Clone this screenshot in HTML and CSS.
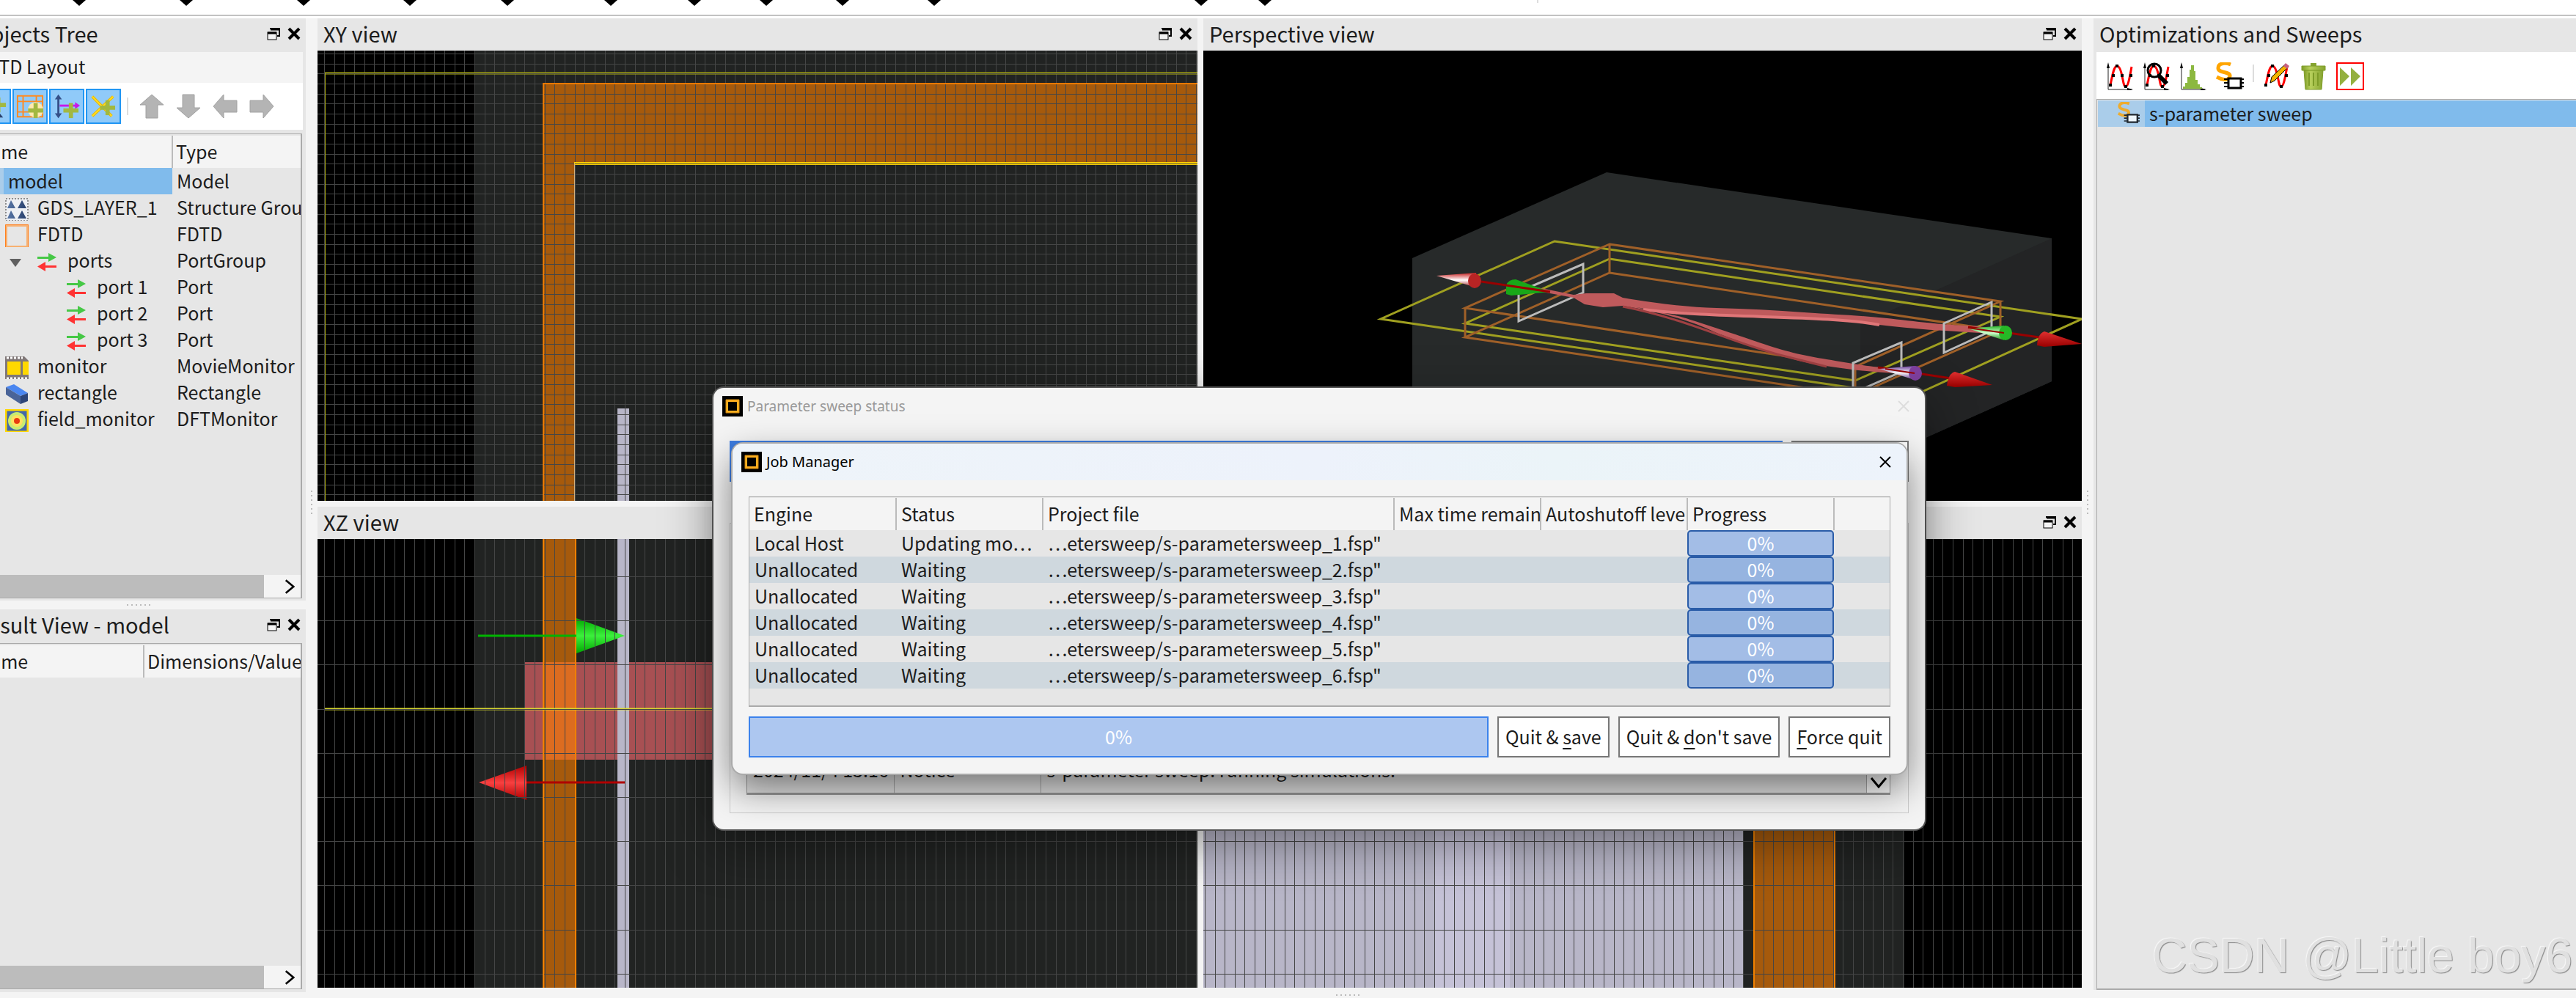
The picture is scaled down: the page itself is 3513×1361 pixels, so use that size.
FILE: index.html
```html
<!DOCTYPE html>
<html lang="en">
<head>
<meta charset="utf-8">
<title>FDTD Layout</title>
<link rel="stylesheet" href="styles.css">
</head>
<body>
<svg class="defs" aria-hidden="true">
  <defs>
    <symbol id="float" viewBox="0 0 18 18"><path d="M5 3V2h12v10h-3" fill="none" stroke="#000" stroke-width="2"/><path d="M5 3h12" stroke="#000" stroke-width="3"/><rect x="1" y="7" width="12" height="10" fill="#f4f4f4" stroke="#000" stroke-width="1"/><path d="M1 8h12" stroke="#000" stroke-width="3"/></symbol>
    <symbol id="cross" viewBox="0 0 18 18"><path d="M2 2l14 14M16 2L2 16" stroke="#000" stroke-width="4"/></symbol>
    <symbol id="thin-cross" viewBox="0 0 16 16"><path d="M1 1l14 14M15 1L1 15" stroke="currentColor" stroke-width="2"/></symbol>
    <symbol id="app" viewBox="0 0 28 28"><path d="M0 0h28v28H0z"/><path d="M6.500 6.500h15v15h-15z" fill="none" stroke="#ffb020" stroke-width="3"/><path d="M5 5h18v18H5z" fill="none" stroke="#c98610" stroke-width="1"/></symbol>
    <symbol id="port" viewBox="0 0 28 28"><path d="M1 6h15V1l11 6-11 6V9H1z" fill="#46c846"/><path d="M27 18H12v-5L1 19.500 12 26v-5h15z" fill="#f33"/></symbol>
    <symbol id="arrow" viewBox="0 0 34 36"><path d="M17 2L33 16H25V34H9V16H1z" fill="#b4b4b4" stroke="#a2a2a2"/></symbol>
    <symbol id="plus" viewBox="0 0 22 22"><path d="M8 0h6v8h8v6h-8v8H8v-8H0V8h8z" fill="#a2b840"/></symbol>
    <symbol id="curve" viewBox="0 0 36 38"><path d="M2 37V4M2 37H34" fill="none" stroke="#222" stroke-width="1"/><path d="M2 0l2 8H0zM36 37l-8 2v-4z"/><path d="M5 31C8 16 10 5 14 5S20 14 21 19C23 27 23 33 26 33S31 23 34 6" fill="none" stroke="#f00" stroke-width="3"/><path d="M3 29h4v4H3zM12 3h4v4h-4zM7 16h4v4H7zM19 16h4v4h-4zM24 31h4v4h-4zM31 16h4v4h-4z"/></symbol>
    <symbol id="sparam" viewBox="0 0 38 38"><path d="M20 3C12 0 3 1 3 8S20 12 19 19 8 24 1 20" fill="none" stroke="#ffa500" stroke-width="5"/><path d="M11 23h5M11 28h5M11 33h5M34 23h4M34 28h4M34 33h4" stroke="#000" stroke-width="2"/><path d="M17 22h17v13H17z" fill="#fff" stroke="#000" stroke-width="3"/></symbol>
    <pattern id="grid-xy" width="41" height="41" patternUnits="userSpaceOnUse" x="9" y="4"><path d="M0 .5h41M0 14.500h41M0 27.500h41M.5 0v41M14.500 0v41M27.500 0v41" stroke="#454646"/></pattern>
    <pattern id="grid-xz" width="41" height="301" patternUnits="userSpaceOnUse" x="9" y="51"><path d="M0 .5h41M0 60.500h41M0 120.500h41M0 181.500h41M0 241.500h41M.5 0v301M14.500 0v301M27.500 0v301" stroke="#454646"/></pattern>
    <pattern id="grid-yz" width="68" height="301" patternUnits="userSpaceOnUse" x="2" y="51"><path d="M0 .5h68M0 60.500h68M0 120.500h68M0 181.500h68M0 241.500h68M.5 0v301M14.500 0v301M27.500 0v301M41.500 0v301M54.500 0v301" stroke="#454646"/></pattern>
    <linearGradient id="g-green" x2="0" y2="1"><stop offset="0" stop-color="#00a800"/><stop offset=".5" stop-color="#3cf03c"/><stop offset="1" stop-color="#00a800"/></linearGradient>
    <linearGradient id="g-red" x2="0" y2="1"><stop offset="0" stop-color="#b00000"/><stop offset=".5" stop-color="#f84040"/><stop offset="1" stop-color="#b00000"/></linearGradient>
    <linearGradient id="g-cone" x2="0" y2="1"><stop offset="0" stop-color="#c82020"/><stop offset=".5" stop-color="#fff"/><stop offset="1" stop-color="#a01010"/></linearGradient>
    <linearGradient id="g-gcone" x2="0" y2="1"><stop offset="0" stop-color="#20b020"/><stop offset=".5" stop-color="#d0ffd0"/><stop offset="1" stop-color="#109010"/></linearGradient>
    <linearGradient id="g-pcone" x2="0" y2="1"><stop offset="0" stop-color="#7040a0"/><stop offset=".5" stop-color="#fff"/><stop offset="1" stop-color="#603090"/></linearGradient>
    <linearGradient id="g-dark" x2="0" y2="1"><stop offset="0" stop-color="#e03030"/><stop offset="1" stop-color="#900"/></linearGradient>
    <linearGradient id="g-bin" x2="1" y2="0"><stop offset="0" stop-color="#7e9c28"/><stop offset=".35" stop-color="#b8d05c"/><stop offset="1" stop-color="#86a430"/></linearGradient>
    <linearGradient id="g-pyr" x2="1" y2="0"><stop offset="0" stop-color="#5a78a8"/><stop offset="1" stop-color="#28406c"/></linearGradient>
  </defs>
</svg>

<header class="toolstrip">
  <svg class="fill"><path d="M99 0h18l-9 8zM245 0h18l-9 8zM405 0h18l-9 8zM550 0h18l-9 8zM683 0h18l-9 8zM824 0h18l-9 8zM938 0h18l-9 8zM1036 0h18l-9 8zM1140 0h18l-9 8zM1265 0h18l-9 8zM1629 0h18l-9 8zM1716 0h18l-9 8z"/><path d="M2097 0v4" stroke="#ddd" stroke-width="2"/></svg>
</header>

<main class="workspace">
  <div class="left">
    <section class="dock">
      <div class="dock-title"><h2>Objects Tree</h2><button aria-label="Float"><svg><use href="#float"/></svg></button><button aria-label="Close"><svg><use href="#cross"/></svg></button></div>
      <div class="layout-name">FDTD Layout</div>
      <div class="tree-tools">
        <button class="tool on" aria-label="Add structure"><svg viewBox="0 0 40 32"><path d="M24 20l10 12H14z" fill="#28406c"/><use href="#plus" x="16" y="3" width="22" height="22"/></svg></button>
        <button class="tool on" aria-label="Add simulation"><svg viewBox="0 0 40 34"><path d="M2 2h36v30H2zM10 2v30M29 2v30M2 10h36M2 25h36" fill="none" stroke="#ff8a20" stroke-width="2"/><circle cx="28" cy="22" r="11" fill="#ffe9b0"/><use href="#plus" x="17" y="12" width="22" height="22"/></svg></button>
        <button class="tool on" aria-label="Add source"><svg viewBox="0 0 40 34"><path d="M8 3v28" stroke="#345088" stroke-width="3"/><path d="M8 0l5 7H3zM8 34l5-7H3z" fill="#345088"/><path d="M10 16h24" stroke="#c818e8" stroke-width="3"/><path d="M32 11l7 5-7 5z" fill="#c818e8"/><use href="#plus" x="15" y="12" width="22" height="22"/></svg></button>
        <button class="tool on" aria-label="Add monitor"><svg viewBox="0 0 40 34"><path d="M4 3l28 28M34 3L4 31" stroke="#e8b800" stroke-width="4"/><path d="M4 3l28 28M34 3L4 31" stroke="#ffdc20" stroke-width="2"/><use href="#plus" x="15" y="8" width="22" height="22"/></svg></button>
        <span class="sep"></span>
        <button class="tool" aria-label="Move up"><svg viewBox="0 0 34 36"><use href="#arrow"/></svg></button>
        <button class="tool" aria-label="Move down"><svg viewBox="0 0 34 36"><use href="#arrow" transform="rotate(180 17 18)"/></svg></button>
        <button class="tool" aria-label="Move left"><svg viewBox="0 0 34 36"><use href="#arrow" transform="rotate(-90 17 18)"/></svg></button>
        <button class="tool" aria-label="Move right"><svg viewBox="0 0 34 36"><use href="#arrow" transform="rotate(90 17 18)"/></svg></button>
      </div>
      <div class="frame tree-frame">
        <table class="tree">
          <colgroup><col class="c-name"><col></colgroup>
          <thead><tr><th>Name</th><th>Type</th></tr></thead>
          <tbody>
            <tr class="selected"><td class="l0">model</td><td>Model</td></tr>
            <tr><td class="l1"><svg viewBox="0 0 32 32"><path d="M1 1h30v30H1z" fill="#eef0f4" stroke="#333" stroke-dasharray="2 2"/><path d="M8 3l6 11H3zM23 3l6 11H17zM8 17l6 11H3zM23 17l6 11H17z" fill="url(#g-pyr)"/></svg>GDS_LAYER_1</td><td>Structure Group</td></tr>
            <tr><td class="l1"><svg viewBox="0 0 32 32"><path d="M1.500 1.500h29v29h-29z" fill="#e6e6e6" stroke="#f7b070" stroke-width="3"/><path d="M.5.5h31v31H.5z" fill="none" stroke="#ff8020"/></svg>FDTD</td><td>FDTD</td></tr>
            <tr><td class="l1"><svg viewBox="0 0 32 32"><path d="M6 11h16l-8 11z" fill="#606060"/></svg><svg viewBox="0 0 28 28"><use href="#port"/></svg>ports</td><td>PortGroup</td></tr>
            <tr><td class="l3"><svg viewBox="0 0 28 28"><use href="#port"/></svg>port 1</td><td>Port</td></tr>
            <tr><td class="l3"><svg viewBox="0 0 28 28"><use href="#port"/></svg>port 2</td><td>Port</td></tr>
            <tr><td class="l3"><svg viewBox="0 0 28 28"><use href="#port"/></svg>port 3</td><td>Port</td></tr>
            <tr><td class="l1"><svg viewBox="0 0 32 32"><path d="M0 0h26l6 6v26H0z" fill="#807878"/><path d="M2 2h22M2 30h29" stroke="#fff" stroke-width="3" stroke-dasharray="3 2"/><path d="M3 7h18v18H3zM24 7h8v18h-8z" fill="#ffd800"/></svg>monitor</td><td>MovieMonitor</td></tr>
            <tr><td class="l1"><svg viewBox="0 0 32 32"><path d="M1 6L12 2 31 14 21 18z" fill="#4a86f0"/><path d="M1 6l20 12v11L1 16z" fill="#4a6498"/><path d="M21 18l10-4v11l-10 4z" fill="#2c4478"/></svg>rectangle</td><td>Rectangle</td></tr>
            <tr><td class="l1"><svg viewBox="0 0 32 32"><path d="M1 1h30v30H1z" fill="#4468a8" stroke="#ffd800" stroke-width="3"/><circle cx="16" cy="16" r="12" fill="#c8ec70"/><circle cx="16" cy="16" r="8" fill="#ffe060"/><circle cx="16" cy="16" r="4" fill="#e83c10"/></svg>field_monitor</td><td>DFTMonitor</td></tr>
          </tbody>
        </table>
        <div class="hscroll"><span class="thumb"></span><svg viewBox="0 0 16 24"><path d="M2 2l12 10L2 22" fill="none" stroke="#000" stroke-width="3"/></svg></div>
      </div>
    </section>
    <div class="hsplit"></div>
    <section class="dock result">
      <div class="dock-title"><h2>Result View - model</h2><button aria-label="Float"><svg><use href="#float"/></svg></button><button aria-label="Close"><svg><use href="#cross"/></svg></button></div>
      <div class="frame result-frame">
        <table class="tree">
          <colgroup><col class="c-result"><col></colgroup>
          <thead><tr><th>Name</th><th>Dimensions/Value</th></tr></thead>
        </table>
        <div class="hscroll"><span class="thumb"></span><svg viewBox="0 0 16 24"><path d="M2 2l12 10L2 22" fill="none" stroke="#000" stroke-width="3"/></svg></div>
      </div>
    </section>
  </div>
  <div class="vsplit"><i></i></div>

  <div class="views">
    <section class="dock">
      <div class="dock-title"><h2>XY view</h2><button aria-label="Float"><svg><use href="#float"/></svg></button><button aria-label="Close"><svg><use href="#cross"/></svg></button></div>
      <svg class="canvas">
        <rect x="214" width="100%" height="100%" fill="#212322"/>
        <path d="M307 44H2400V154H350V900H307z" fill="#a65a0c"/>
        <rect width="100%" height="100%" fill="url(#grid-xy)"/>
        <path d="M308 900V45H2400" fill="none" stroke="#e87800" stroke-width="2"/>
        <path d="M350 154H2400" stroke="#ffd000" stroke-width="4"/><path d="M350 154.500H2400" stroke="#454646"/>
        <path d="M350.500 154V900" stroke="#d0b080"/>
        <path d="M10 31H2400" stroke="#a8a810" stroke-width="3"/><path d="M10 31.500H2400" stroke="#454646"/>
        <path d="M10.500 31V900" stroke="#a8a810"/>
        <path d="M409 488h16v400h-16z" fill="#b8b6c8"/><path d="M419.500 488V900M409 496.500h16M409 510.500h16M409 523.500h16M409 537.500h16M409 551.500h16M409 564.500h16M409 578.500h16M409 592.500h16M409 605.500h16" stroke="#454646"/>
      </svg>
    </section>
    <section class="dock">
      <div class="dock-title"><h2>Perspective view</h2><button aria-label="Float"><svg><use href="#float"/></svg></button><button aria-label="Close"><svg><use href="#cross"/></svg></button></div>
      <svg class="canvas">
        <path d="M285 283L550 166 1157 256V451L985 528 700 656H285z" fill="#272a2a"/>
        <path d="M896 373L1157 256V451L985 528 896 570z" fill="#232425"/>
        <g fill="none" stroke-width="3">
          <path d="M887 460L242 366 479 260 1198 366 950 479" stroke="#a0a020"/>
          <path d="M554 284L1087 363 889 450 357 372z" stroke="#a0a020"/>
          <path d="M554 264L1087 342 889 431 357 351zM554 303L1087 382 889 470 357 391zM554 264v39M1087 342v40M357 351v40M889 431v39" stroke="#a06028"/>
          <path d="M430 329L518 291V330L430 369z" stroke="#bbb"/>
        </g>
        <path d="M446 321L505 333 522 331 560 331 572 337C620 345 660 350 700 351S780 354 819 357 880 360 922 364 1000 374 1060 376V385C1010 382 970 380 922 374 860 366 850 366 819 366S740 362 700 361 630 357 590 350C630 358 650 362 664 367 700 378 740 392 764 400 800 412 820 416 850 421S900 430 944 434V440C900 438 860 432 830 427 780 416 740 400 700 385 660 366 620 356 572 348L545 350 520 346 505 337 446 326z" fill="#bf5a5c"/>
        <path d="M600 353C700 366 850 360 922 374" fill="none" stroke="#e07678" stroke-width="4"/>
        <path d="M572 349C660 366 720 398 790 416L850 431" fill="none" stroke="#a04042" stroke-width="3"/>
        <g fill="none" stroke="#bbb" stroke-width="3"><path d="M1010 372L1075 343V382L1010 412z"/><path d="M886 470V426L952 398V438L886 467"/></g>
        <path d="M318 307L372 303V323z" fill="url(#g-cone)"/><ellipse cx="370" cy="314" rx="9" ry="10" fill="#b82424"/>
        <path d="M413 332V320Q416 312 426 312L473 329 420 334z" fill="#18a818"/>
        <path d="M379 315L473 329M1043 377L1140 391M920 432L1020 447" stroke="#900" stroke-width="3"/>
        <path d="M1043 379L1092 375V395z" fill="url(#g-gcone)"/><ellipse cx="1094" cy="385" rx="9" ry="10" fill="#26b826"/>
        <path d="M922 434L970 430V449z" fill="url(#g-pcone)"/><ellipse cx="971" cy="440" rx="9" ry="10" fill="#8040a0"/>
        <path d="M1043 378L1092 385M930 434L970 440" stroke="#900" stroke-width="2"/>
        <path d="M1137 402Q1138 386 1147 383L1198 400 1147 404z" fill="url(#g-dark)"/>
        <path d="M1014 457Q1016 440 1025 438L1076 456 1025 459z" fill="url(#g-dark)"/>
      </svg>
    </section>
    <section class="dock">
      <div class="dock-title"><h2>XZ view</h2><button aria-label="Float"><svg><use href="#float"/></svg></button><button aria-label="Close"><svg><use href="#cross"/></svg></button></div>
      <svg class="canvas">
        <rect x="214" width="100%" height="100%" fill="#212322"/>
        <rect x="283" y="168" width="100%" height="133" fill="#a85053"/>
        <rect x="307" width="46" height="100%" fill="#a65a0c"/>
        <rect x="311" y="168" width="42" height="133" fill="#dc6c20"/>
        <rect x="409" width="16" height="100%" fill="#b8b6c8"/>
        <path d="M353 108L419 132 353 156z" fill="url(#g-green)"/>
        <path d="M220 332L285 309V356z" fill="url(#g-red)"/>
        <rect width="100%" height="100%" fill="url(#grid-xz)"/>
        <path d="M308 0V900M352 0V900" stroke="#f08000" stroke-width="2"/>
        <path d="M10 232H2400" stroke="#d8d830" stroke-width="3"/><path d="M10 232.500H2400" stroke="#454646"/>
        <path d="M219 132H353" stroke="#00b400" stroke-width="3"/><path d="M285 332H419" stroke="#b00000" stroke-width="3"/>
      </svg>
    </section>
    <section class="dock">
      <div class="dock-title"><h2>YZ view</h2><button aria-label="Float"><svg><use href="#float"/></svg></button><button aria-label="Close"><svg><use href="#cross"/></svg></button></div>
      <svg class="canvas">
        <rect width="956" height="100%" fill="#212322"/>
        <rect width="737" height="100%" fill="#b8b6c8"/>
        <rect x="316" width="102" height="100%" fill="#c5c2d7"/>
        <rect x="750" width="112" height="100%" fill="#a65a0c"/>
        <rect width="100%" height="100%" fill="url(#grid-yz)"/>
        <path d="M751 0V900M861 0V900" stroke="#f08000" stroke-width="2"/>
      </svg>
    </section>
  </div>
  <div class="vsplit"><i></i></div>

  <section class="dock right">
    <div class="dock-title"><h2>Optimizations and Sweeps</h2></div>
    <div class="sweep-tools">
      <button class="tool" aria-label="Sweep"><svg viewBox="0 0 36 38"><use href="#curve"/></svg></button>
      <button class="tool" aria-label="Optimization"><svg viewBox="0 0 36 38"><use href="#curve"/><circle cx="15" cy="11" r="9" fill="none" stroke="#000" stroke-width="3"/><path d="M20 17l12 12" stroke="#000" stroke-width="6"/></svg></button>
      <button class="tool" aria-label="Yield"><svg viewBox="0 0 36 38"><path d="M2 37V4M2 37H34" stroke="#222"/><path d="M2 0l2 8H0zM36 37l-8 2v-4z"/><path d="M4 36v-3h3v-5h3v-8h3V10h2V4h4v8h2v12h3v6h3v4h3v2z" fill="#8cb840"/></svg></button>
      <button class="tool" aria-label="S-parameter sweep"><svg viewBox="0 0 38 38"><use href="#sparam"/></svg></button>
      <span class="sep"></span>
      <button class="tool" aria-label="Edit"><svg viewBox="0 0 36 38"><path d="M3 31C6 16 8 5 12 5S18 14 19 19C21 27 21 33 24 33S29 23 32 6" fill="none" stroke="#f00" stroke-width="3"/><path d="M1 29h4v4H1zM10 3h4v4h-4zM5 16h4v4H5zM22 31h4v4h-4zM29 16h4v4h-4z"/><path d="M9 28l2-8L30 2l4 4-19 19z" fill="#f5b400" stroke="#000"/><path d="M27 5l3-4 5 4-3 4z" fill="#c86080"/></svg></button>
      <button class="tool" aria-label="Delete"><svg viewBox="0 0 34 38"><path d="M13 1h8v4h-8z" fill="#86a430"/><path d="M1 5h32v6H1z" fill="url(#g-bin)" stroke="#7e9c28"/><path d="M4 11h26l-2 26H6z" fill="url(#g-bin)" stroke="#7e9c28"/><path d="M11 14v18M17 14v18M23 14v18" stroke="#7e9c28" stroke-width="2"/></svg></button>
      <button class="tool" aria-label="Run"><svg viewBox="0 0 38 38"><path d="M1 1h36v36H1z" fill="#fff" stroke="#f00" stroke-width="2"/><path d="M5 7l13 12L5 32zM20 7l13 12-13 13z" fill="#94b040"/></svg></button>
    </div>
    <div class="frame sweep-frame">
      <div class="sweep-row"><span class="sweep-icon"><svg viewBox="0 0 38 38"><use href="#sparam"/></svg></span><span>s-parameter sweep</span></div>
      <div class="watermark">CSDN @Little boy6</div>
    </div>
  </section>
</main>
<footer class="bottom"><i></i></footer>

<section class="window status-window" aria-label="Parameter sweep status">
  <div class="window-title"><svg><use href="#app"/></svg><h3>Parameter sweep status</h3><button aria-label="Close"><svg><use href="#thin-cross"/></svg></button></div>
  <div class="status-actions"><div class="bar solid"></div><button class="push" aria-label="Abort"></button></div>
  <div class="group">
    <div class="log">
      <table><colgroup><col class="w1"><col class="w1"><col></colgroup><tbody><tr><td>2024/11/4 15:16</td><td>Notice</td><td>s-parameter sweep: running simulations.</td></tr></tbody></table>
      <div class="log-scroll"><svg viewBox="0 0 24 16"><path d="M2 2l10 12L22 2" fill="none" stroke="#000" stroke-width="3"/></svg></div>
    </div>
  </div>
</section>

<section class="window job-window" aria-label="Job Manager">
  <div class="window-title"><svg><use href="#app"/></svg><h3>Job Manager</h3><button aria-label="Close"><svg><use href="#thin-cross"/></svg></button></div>
  <div class="jobs-body">
    <div class="jobs-frame">
      <table class="jobs">
        <colgroup><col class="w1"><col class="w1"><col class="w-file"><col class="w1"><col class="w1"><col class="w1"><col></colgroup>
        <thead><tr><th>Engine</th><th>Status</th><th>Project file</th><th>Max time remaining</th><th>Autoshutoff level</th><th>Progress</th><th></th></tr></thead>
        <tbody>
          <tr><td>Local Host</td><td>Updating mo…</td><td>…etersweep/s-parametersweep_1.fsp"</td><td></td><td></td><td class="prog"><div>0%</div></td><td></td></tr>
          <tr><td>Unallocated</td><td>Waiting</td><td>…etersweep/s-parametersweep_2.fsp"</td><td></td><td></td><td class="prog"><div>0%</div></td><td></td></tr>
          <tr><td>Unallocated</td><td>Waiting</td><td>…etersweep/s-parametersweep_3.fsp"</td><td></td><td></td><td class="prog"><div>0%</div></td><td></td></tr>
          <tr><td>Unallocated</td><td>Waiting</td><td>…etersweep/s-parametersweep_4.fsp"</td><td></td><td></td><td class="prog"><div>0%</div></td><td></td></tr>
          <tr><td>Unallocated</td><td>Waiting</td><td>…etersweep/s-parametersweep_5.fsp"</td><td></td><td></td><td class="prog"><div>0%</div></td><td></td></tr>
          <tr><td>Unallocated</td><td>Waiting</td><td>…etersweep/s-parametersweep_6.fsp"</td><td></td><td></td><td class="prog"><div>0%</div></td><td></td></tr>
        </tbody>
      </table>
    </div>
    <div class="jobs-actions">
      <div class="bar">0%</div>
      <button class="push">Quit &amp; <u>s</u>ave</button>
      <button class="push">Quit &amp; <u>d</u>on't save</button>
      <button class="push"><u>F</u>orce quit</button>
    </div>
  </div>
</section>
</body>
</html>
```
FILE: styles.css
```css
* { box-sizing: border-box; }
body {
  margin: 0;
  height: 100vh;
  overflow: hidden;
  display: flex;
  flex-direction: column;
  background: #f4f4f4;
  color: #1c1c1c;
  font: 25px/34px "Noto Sans CJK SC", sans-serif;
}
h2, h3 { margin: 0; font-weight: 400; }
button { font: inherit; color: inherit; background: none; border: 0; padding: 0; }
svg { display: block; flex: none; }
table { border-collapse: collapse; table-layout: fixed; width: 100%; }
th, td { padding: 0 0 2px; text-align: left; font-weight: 400; white-space: nowrap; overflow: hidden; }
.defs { position: absolute; width: 0; height: 0; }

.toolstrip { height: 25px; background: linear-gradient(#fff 20px, #c2c2c2 20px, #c2c2c2 22px, #fff 22px); }
.fill { width: 100%; height: 20px; }
.workspace { flex: 1; min-height: 0; display: grid; grid-template-columns: 417px 16px minmax(0, 1fr) 16px 658px; }
.bottom { height: 8px; display: flex; justify-content: center; padding: 3px 0 0 164px; }
.bottom i { width: 34px; height: 2px; background: repeating-linear-gradient(90deg, #bbb 0 2px, transparent 2px 6px); }

.dock { background: #e6e6e6; display: flex; flex-direction: column; min-width: 0; min-height: 0; }
.dock-title { height: 44px; flex: none; display: flex; align-items: center; gap: 10px; padding: 0 7px 2px 8px; }
.dock-title h2 { flex: 1; font-size: 29px; line-height: 38px; padding-bottom: 3px; white-space: nowrap; }
.dock-title svg { width: 18px; height: 18px; }

.left { display: flex; flex-direction: column; margin-left: -40px; }
.left .dock { flex: 794; }
.left .result { flex: 522; }
.left .dock-title { height: 46px; padding: 0 7px 4px 6px; }
.hsplit { height: 12px; margin-left: 213px; width: 33px; background: repeating-linear-gradient(90deg, #bbb 0 2px, transparent 2px 6px) 0 5px / 33px 2px no-repeat; }
.layout-name { background: #f4f4f4; height: 42px; padding: 2px 8px; margin-right: 4px; }
.tree-tools { display: flex; align-items: center; gap: 2px; height: 64px; background: #fff; margin-right: 4px; padding-left: 7px; }
.tool { width: 48px; height: 48px; display: grid; place-items: center; }
.tool svg { width: 38px; height: 36px; }
.tool.on { background: #90caf9; border: 2px solid #2196f3; }
.sep { width: 2px; height: 24px; background: #ddd; margin: 0 6px; }
.tree-frame, .result-frame { flex: 1; margin: 0 5px 3px 0; padding-top: 2px; border: 1px solid #aaa; border-right-width: 2px; display: flex; flex-direction: column; min-height: 0; }
.tree-frame { margin-top: 5px; }
.tree th { background: #f4f4f4; height: 44px; padding-left: 8px; }
.tree th + th { border-left: 2px solid #bbb; padding-left: 4px; }
.tree td { height: 36px; padding-left: 6px; }
.tree td svg { display: inline-block; width: 32px; height: 32px; margin: 0 12px 0 -4px; vertical-align: middle; margin-top: -4px; margin-bottom: -4px; }
.tree td svg + svg { margin-left: -1px; margin-right: 14px; width: 28px; }
.tree .l0 { padding-left: 50px; background: linear-gradient(90deg, #aacdea 44px, #80bbec 44px); }
.tree .l1 { padding-left: 50px; }
.tree .l3 { padding-left: 133px; }
.tree .l3 svg { width: 28px; margin-right: 14px; }
.c-name { width: 274px; }
.c-result { width: 235px; }
.hscroll { margin-top: auto; height: 31px; display: flex; justify-content: space-between; align-items: center; background: #f4f4f4; padding-right: 8px; }
.hscroll .thumb { width: 399px; height: 100%; background: #bcbcbc; }
.hscroll svg { width: 14px; height: 22px; }
.result-frame { margin-bottom: 4px; }

.vsplit { display: grid; place-items: center; }
.vsplit i { width: 2px; height: 34px; margin-bottom: 6px; background: repeating-linear-gradient(#bbb 0 2px, transparent 2px 6px); }
.views { display: grid; grid-template-columns: minmax(0, 1200fr) minmax(0, 1198fr); grid-template-rows: minmax(0, 658fr) minmax(0, 656fr); gap: 8px; padding-bottom: 6px; }
.canvas { width: 100%; flex: 1; min-height: 0; background: #000; }

.right { margin-bottom: 3px; }
.sweep-tools { margin: 2px 0 0 4px; background: #fff; height: 64px; display: flex; align-items: center; gap: 2px; padding: 2px 0 0 8px; }
.sweep-tools .tool svg { height: 38px; }
.sweep-tools .sep { margin: 0 5px 8px; }
.sweep-frame { flex: 1; margin-left: 4px; border: 1px solid #aaa; border-width: 1px 0 2px 1px; padding: 1px 0 5px 1px; display: flex; flex-direction: column; justify-content: space-between; overflow: hidden; }
.sweep-row { height: 36px; background: #80bbec; display: flex; gap: 6px; }
.sweep-icon { width: 64px; background: #aacdea; padding: 2px 0 0 26px; }
.sweep-icon svg { width: 32px; height: 30px; opacity: .8; }
.watermark { margin-left: 74px; white-space: nowrap; font: 66px/80px "Liberation Sans", sans-serif; color: #e0e0e0; text-shadow: 1px 1px 1px #888, -1px -1px 1px #f8f8f8; }

.window { position: absolute; border-radius: 14px; background: #f4f4f4; display: flex; flex-direction: column; overflow: hidden; }
.status-window { left: 973px; top: 529px; width: 1652px; height: 602px; box-shadow: 0 0 0 2px #555, 0 20px 70px rgba(0, 0, 0, .4); padding-bottom: 22px; }
.job-window { left: 999px; top: 605px; width: 1601px; height: 450px; box-shadow: 0 0 0 2px #aaa, 0 20px 50px rgba(0, 0, 0, .5); }
.window-title { height: 50px; flex: none; display: flex; align-items: center; gap: 6px; padding: 0 21px 0 12px; color: #000; }
.window-title h3 { flex: 1; font: 20px/30px "Noto Sans", sans-serif; }
.window-title svg { width: 28px; height: 28px; }
.window-title button svg { width: 16px; height: 16px; }
.status-window .window-title { color: #999; }
.status-window .window-title h3 { font-size: 19px; }
.status-window .window-title button { color: #ddd; }
.job-window .window-title { background: linear-gradient(90deg, #eef4f9, #edf2fb 50%, #ebf4f8 70%, #edf3fb); }

.status-actions { display: flex; gap: 12px; padding: 22px 22px 0; }
.bar { flex: 1; height: 56px; border: 2px solid #3b82ec; background: #adc7f0; color: #fff; text-align: center; line-height: 50px; }
.bar.solid { background: #3b7ce0; border-color: #3b7ce0; }
.push { height: 56px; padding: 0 9px 2px; border: 2px solid #777; background: #fff; white-space: nowrap; }
.push u { text-underline-offset: 5px; text-decoration-thickness: 2px; }
.status-actions .push { width: 160px; }
.group { flex: 1; margin: 56px 22px 0; border: 1px solid #ccc; display: flex; padding: 0 24px 24px 22px; min-height: 0; }
.log { flex: 1; border: 1px solid #999; border-bottom-width: 3px; background: #e6e6e6; display: flex; align-items: flex-end; }
.log td { height: 49px; padding-left: 8px; vertical-align: top; border-right: 1px solid #aaa; }
.log td:last-child { border: 0; }
.log-scroll { flex: none; width: 32px; height: 60px; background: #fff; border-left: 1px solid #aaa; display: flex; justify-content: center; align-items: flex-end; padding-bottom: 6px; }
.log-scroll svg { width: 24px; height: 16px; }

.jobs-body { padding: 22px 22px 22px; display: flex; flex-direction: column; gap: 13px; flex: 1; }
.jobs-frame { flex: 1; background: #e6e6e6; border: 1px solid #aaa; border-bottom-width: 2px; padding-top: 1px; }
.w1 { width: 200px; }
.w-file { width: 479px; }
.jobs th { height: 44px; background: #f4f4f4; padding-left: 6px; border-right: 2px solid #bbb; }
.jobs th:last-child { border: 0; }
.jobs td { height: 36px; padding-left: 7px; }
.jobs tbody tr:nth-child(even) { background: #cfd8de; }
.jobs td.prog { padding: 0; }
.prog div { height: 36px; border: 2px solid #2a5ca8; border-radius: 5px; background: #a3bde6; color: #fff; line-height: 30px; text-align: center; }
.jobs tr:nth-child(even) .prog div { background: #96b4e0; }
.jobs-actions { display: flex; gap: 12px; }
```
